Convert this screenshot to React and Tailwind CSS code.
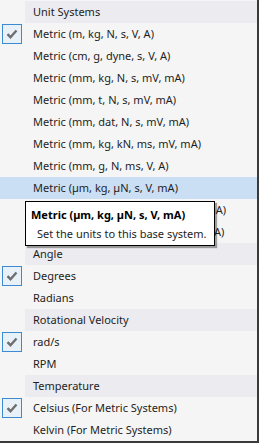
import React from "react";

const Check = () => (
  <div className="w-[20px] h-[20px] ml-[2px] border border-[#3c8bd0] bg-[#e8f0f8] flex items-center justify-center">
    <svg width="12" height="10" viewBox="0 0 12 10">
      <path d="M1.5 5.2 L4.5 8.2 L10.5 1.5" fill="none" stroke="#6e6e6e" strokeWidth="2.4" strokeLinejoin="miter" />
    </svg>
  </div>
);

const Header = ({ label }) => (
  <div className="flex h-[22px] items-center">
    <div className="w-[25px] shrink-0" />
    <div className="flex-1 h-full bg-[#ebebf0] flex items-center pl-[8px] text-[#1e1e1e]">{label}</div>
  </div>
);

const Item = ({ label, checked, hl }) => (
  <div className={"flex h-[22px] items-center " + (hl ? "bg-[#cadef4]" : "")}>
    <div className="w-[25px] shrink-0 flex items-center">{checked && <Check />}</div>
    <div className="pl-[8px] whitespace-nowrap text-[#1e1e1e]">{label}</div>
  </div>
);

export default function App() {
  return (
    <div
      className="relative w-[259px] h-[443px] bg-[#f5f5f5] border-r-2 border-b-2 border-[#3a3a3a] text-[11px] overflow-hidden"
      style={{ fontFamily: '"Noto Sans", sans-serif' }}
    >
      <div className="pt-px">
        <Header label="Unit Systems" />
        <Item label="Metric (m, kg, N, s, V, A)" checked />
        <Item label="Metric (cm, g, dyne, s, V, A)" />
        <Item label="Metric (mm, kg, N, s, mV, mA)" />
        <Item label="Metric (mm, t, N, s, mV, mA)" />
        <Item label="Metric (mm, dat, N, s, mV, mA)" />
        <Item label="Metric (mm, kg, kN, ms, mV, mA)" />
        <Item label="Metric (mm, g, N, ms, V, A)" />
        <Item label="Metric (µm, kg, µN, s, V, mA)" hl />
        <Item label="English (in, lbm, lbf, slinch, s, mV, mA)" />
        <Item label="English (ft, lbm, lbf, slinch, s, mV, mA)" />
        <Header label="Angle" />
        <Item label="Degrees" checked />
        <Item label="Radians" />
        <Header label="Rotational Velocity" />
        <Item label="rad/s" checked />
        <Item label="RPM" />
        <Header label="Temperature" />
        <Item label="Celsius (For Metric Systems)" checked />
        <Item label="Kelvin (For Metric Systems)" />
      </div>
      <div className="absolute left-[25px] top-[201px] w-[190px] h-[45px] bg-white border border-black shadow-[2px_2px_1px_rgba(0,0,0,0.35)] pl-[5px] pt-[3px] leading-[19px]">
        <div className="font-bold text-black whitespace-nowrap">Metric (µm, kg, µN, s, V, mA)</div>
        <div className="pl-[6px] text-[#1e1e1e] whitespace-nowrap">Set the units to this base system.</div>
      </div>
    </div>
  );
}
